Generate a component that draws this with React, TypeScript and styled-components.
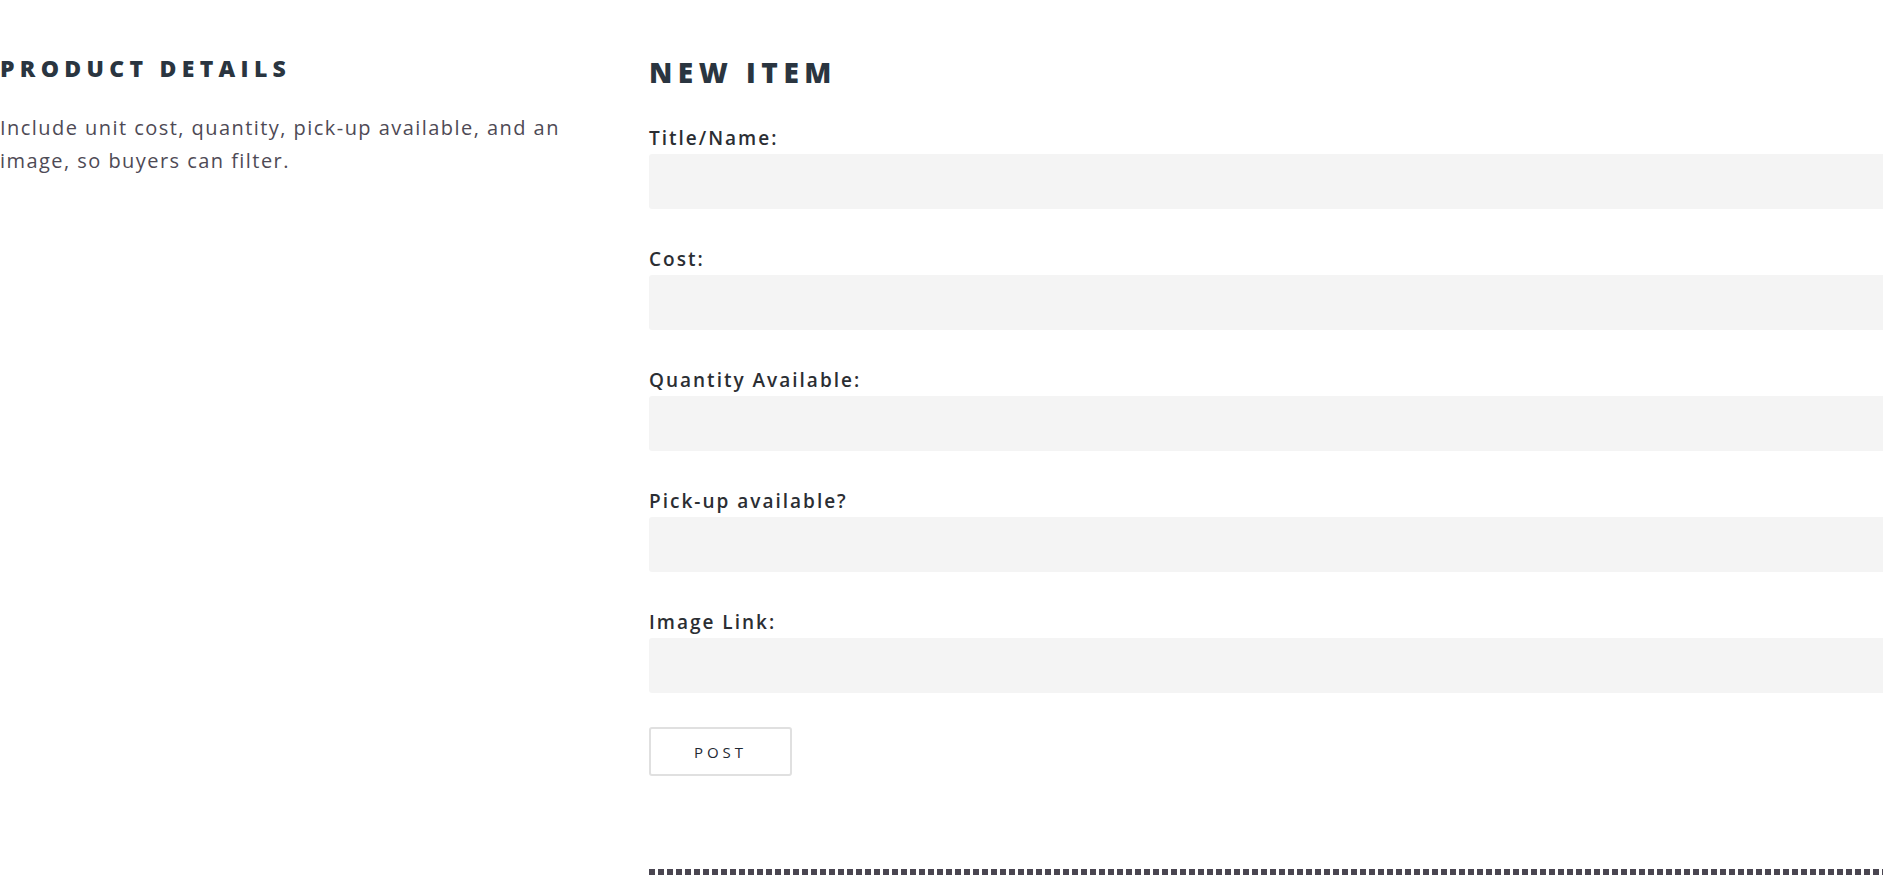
import styled, { createGlobalStyle } from 'styled-components'

const GlobalStyle = createGlobalStyle`
  html, body {
    margin: 0;
    padding: 0;
    background: #ffffff;
    overflow: hidden;
  }
  body {
    font-family: "Open Sans", "Noto Sans", sans-serif;
    color: #2c3440;
  }
  * {
    box-sizing: border-box;
  }
`

const Page = styled.div`
  display: grid;
  grid-template-columns: 585px 1400px;
  column-gap: 64px;
  padding-top: 51px;
  width: 2100px;
`

const Aside = styled.aside`
  display: flex;
  flex-direction: column;
`

const AsideTitle = styled.h3`
  margin: 0 0 25px;
  font-size: 23px;
  font-weight: 800;
  letter-spacing: 5.3px;
  text-transform: uppercase;
  color: #2a3540;
  line-height: 1.5;
`

const AsideText = styled.p`
  margin: 0;
  font-size: 20px;
  line-height: 33.6px;
  letter-spacing: 1.45px;
  color: #4e4a55;
`

const FormColumn = styled.section`
  display: flex;
  flex-direction: column;
`

const FormTitle = styled.h2`
  margin: 0 0 32px;
  font-size: 28px;
  font-weight: 800;
  letter-spacing: 5.5px;
  text-transform: uppercase;
  color: #2a3540;
  line-height: 1.5;
`

const Form = styled.form`
  display: flex;
  flex-direction: column;
`

const Field = styled.div`
  display: flex;
  flex-direction: column;
  gap: 2px;

  & + & {
    margin-top: 37px;
  }
`

const Label = styled.label`
  font-size: 19px;
  font-weight: 600;
  letter-spacing: 2px;
  line-height: 27px;
  color: #2b2e33;
`

const Input = styled.input`
  display: block;
  width: 100%;
  height: 55px;
  border: none;
  border-radius: 3px;
  background: #f4f4f4;
  padding: 0 16px;
  font-family: inherit;
  font-size: 18px;
  outline: none;
`

const Actions = styled.div`
  margin-top: 34px;
`

const PostButton = styled.button`
  width: 143px;
  height: 49px;
  background: #ffffff;
  border: 2px solid #e0e0e0;
  border-radius: 3px;
  font-family: inherit;
  font-size: 15px;
  font-weight: 500;
  letter-spacing: 4px;
  text-transform: uppercase;
  color: #1f2933;
  cursor: pointer;
`

const Divider = styled.div`
  margin-top: 93px;
  height: 6px;
  width: 100%;
  background: repeating-linear-gradient(
    90deg,
    #4a4651 0,
    #4a4651 6px,
    transparent 6px,
    transparent 9px
  );
`

const fields = [
  { id: 'title', label: 'Title/Name:' },
  { id: 'cost', label: 'Cost:' },
  { id: 'quantity', label: 'Quantity Available:' },
  { id: 'pickup', label: 'Pick-up available?' },
  { id: 'image', label: 'Image Link:' },
]

export default function App() {
  return (
    <>
      <GlobalStyle />
      <Page>
        <Aside>
          <AsideTitle>Product Details</AsideTitle>
          <AsideText>
            Include unit cost, quantity, pick-up available, and an image, so buyers can filter.
          </AsideText>
        </Aside>

        <FormColumn>
          <FormTitle>New Item</FormTitle>
          <Form onSubmit={e => e.preventDefault()}>
            {fields.map(f => (
              <Field key={f.id}>
                <Label htmlFor={f.id}>{f.label}</Label>
                <Input id={f.id} type="text" />
              </Field>
            ))}
            <Actions>
              <PostButton type="submit">Post</PostButton>
            </Actions>
          </Form>
          <Divider />
        </FormColumn>
      </Page>
    </>
  )
}
